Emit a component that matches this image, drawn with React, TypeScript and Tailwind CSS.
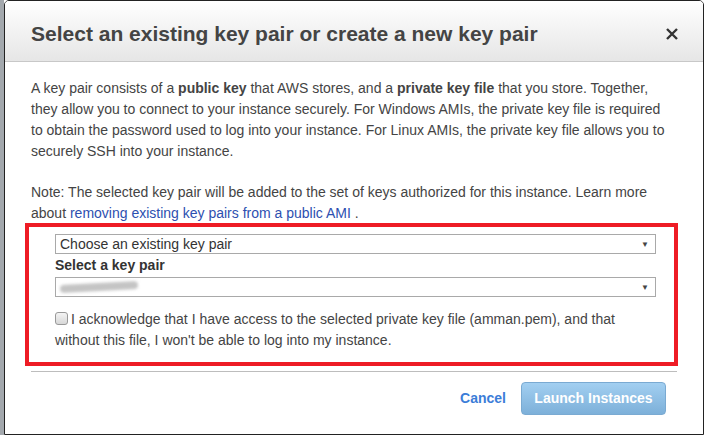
import React from 'react'

const font = { fontFamily: '"Liberation Sans", Arial, sans-serif' }

function SelectBox({ children }: { children?: React.ReactNode }) {
  return (
    <div className="relative flex h-[20px] items-center border border-[#a9a9a9] bg-white pl-[4px] text-[14px] text-[#333]">
      <div className="flex-1">{children}</div>
      <span className="mr-[6px] text-[8px] text-[#444]">▼</span>
    </div>
  )
}

export default function App() {
  return (
    <div className="flex h-[435px] w-[706px] overflow-hidden bg-white" style={font}>
      {/* page behind the dialog */}
      <div className="w-[4px] shrink-0 bg-[#a3a8ad]" />

      <div className="flex flex-1 flex-col overflow-hidden rounded-t-[5px] border border-[#222] bg-white">
        {/* Header */}
        <div className="flex h-[61px] shrink-0 items-center border-b border-[#c8c8c8] bg-gradient-to-b from-white to-[#e6e6e6] pl-[26px] pr-[22px] pt-[6px]">
          <h1 className="flex-1 text-[21px] font-bold text-[#444]">
            Select an existing key pair or create a new key pair
          </h1>
          <svg width="14" height="14" viewBox="0 0 14 14" className="mr-[2px]">
            <path d="M2 2 L12 12 M12 2 L2 12" stroke="#333" strokeWidth="2.4" />
          </svg>
        </div>

        {/* Body */}
        <div className="flex flex-col pl-[26px] pr-[10px] pt-[16px] text-[14px] leading-[21px] text-[#444]">
          <p className="whitespace-nowrap">
            A key pair consists of a <b>public key</b> that AWS stores, and a <b>private key file</b> that you store. Together,
            <br />
            they allow you to connect to your instance securely. For Windows AMIs, the private key file is required
            <br />
            to obtain the password used to log into your instance. For Linux AMIs, the private key file allows you to
            <br />
            securely SSH into your instance.
          </p>
          <p className="mt-[20px] whitespace-nowrap">
            Note: The selected key pair will be added to the set of keys authorized for this instance. Learn more
            <br />
            about <span className="text-[#2d4fb0]">removing existing key pairs from a public AMI</span> .
          </p>

          {/* annotation box */}
          <div className="-ml-[6px] mr-[15px] mt-[-1px] border-[4px] border-[#ee1c25] pb-[11px] pl-[26px] pr-[18px] pt-[7px]">
            <SelectBox>Choose an existing key pair</SelectBox>
            <div className="font-bold leading-[23px] text-[#333]">Select a key pair</div>
            <SelectBox>
              <div className="h-[8px] w-[78px] -rotate-[3deg] rounded-full bg-[#c4c4c4] blur-[1.5px]" />
            </SelectBox>
            <div className="mt-[12px] whitespace-nowrap leading-[21px]">
              <span className="mr-[3px] inline-block h-[13px] w-[13px] translate-y-[1px] rounded-[3px] border border-[#999] bg-gradient-to-b from-[#f4f4f4] to-[#d8d8d8] align-baseline" />
              I acknowledge that I have access to the selected private key file (amman.pem), and that
              <br />
              without this file, I won't be able to log into my instance.
            </div>
          </div>
        </div>

        {/* Footer */}
        <div className="mx-[26px] mt-[5px] border-t border-[#bdbdbd]" />
        <div className="flex items-center justify-end gap-[15px] pr-[37px] pt-[10px]">
          <span className="text-[14px] font-bold text-[#3b7dd8]">Cancel</span>
          <div className="flex h-[33px] w-[145px] items-center justify-center rounded-[4px] border border-[#7aaad2] bg-gradient-to-b from-[#a2cff1] to-[#7db0d9] text-[14px] font-bold text-white">
            Launch Instances
          </div>
        </div>
      </div>

      <div className="w-[2px] shrink-0 bg-white" />
    </div>
  )
}
